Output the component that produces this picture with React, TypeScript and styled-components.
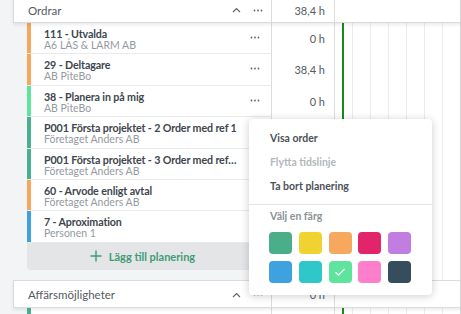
import styled, { createGlobalStyle } from 'styled-components';

const GlobalStyle = createGlobalStyle`
  html, body {
    margin: 0;
    padding: 0;
    background: #f3f4f6;
    font-family: "Lato", "Open Sans", sans-serif;
  }
`;

interface Row {
  title: string;
  sub: string;
  color: string;
  hours: string;
}

const rows: Row[] = [
  { title: '111 - Utvalda', sub: 'A6 LÅS & LARM AB', color: '#f6a75e', hours: '0 h' },
  { title: '29 - Deltagare', sub: 'AB PiteBo', color: '#f6a75e', hours: '38,4 h' },
  { title: '38 - Planera in på mig', sub: 'AB PiteBo', color: '#5ee49c', hours: '0 h' },
  { title: 'P001 Första projektet - 2 Order med ref 1', sub: 'Företaget Anders AB', color: '#48b08c', hours: '' },
  { title: 'P001 Första projektet - 3 Order med referens 2', sub: 'Företaget Anders AB', color: '#48b08c', hours: '' },
  { title: '60 - Arvode enligt avtal', sub: 'Företaget Anders AB', color: '#f6a75e', hours: '' },
  { title: '7 - Aproximation', sub: 'Personen 1', color: '#3fa1df', hours: '' },
];

const swatches = [
  '#4aae8b', '#f0d330', '#f6a95e', '#e2246a', '#c17ddf',
  '#3fa1df', '#2fc7c7', '#5ee49c', '#fd7fcb', '#354d5d',
];

const Page = styled.div`
  position: relative;
  width: 461px;
  height: 314px;
  overflow: hidden;
  background: #f3f4f6;
  display: flex;
  flex-direction: column;
`;

const Group = styled.div<{ $first?: boolean }>`
  display: flex;
  flex-direction: column;
  margin-top: ${p => (p.$first ? '-5px' : '0')};
`;

const Header = styled.div`
  display: flex;
  height: 26px;
  margin-left: 13px;
  background: #fff;
  border: 1px solid #d9dbde;
  border-right: none;
  box-shadow: 0 2px 3px rgba(0, 0, 0, 0.08);
  position: relative;
  z-index: 1;
`;

const HeaderLabel = styled.div`
  width: 258px;
  flex: none;
  display: flex;
  align-items: center;
  padding: 2px 0 0 14px;
  box-sizing: border-box;
  border-right: 1px solid #dcdcdc;
  font-size: 11.5px;
  color: #555b61;
`;

const HeaderTitle = styled.span`
  flex: 1;
`;

const IconSlot = styled.span<{ $w: number }>`
  width: ${p => p.$w}px;
  flex: none;
  display: flex;
  align-items: center;
  justify-content: center;
  color: #5c6369;
`;

const Hours = styled.div<{ $header?: boolean }>`
  width: 63px;
  flex: none;
  box-sizing: border-box;
  border-right: 1px solid #dcdcdc;
  background: #fff;
  display: flex;
  align-items: ${p => (p.$header ? 'center' : 'flex-start')};
  justify-content: flex-end;
  padding: ${p => (p.$header ? '2px 9px 0 0' : '9px 9px 0 0')};
  font-size: 11px;
  color: #555b61;
`;

const Timeline = styled.div<{ $grid?: boolean }>`
  width: 126px;
  flex: none;
  box-sizing: border-box;
  border-right: 1px solid #d4d4d4;
  background-color: #fff;
  background-image: ${p =>
    p.$grid
      ? `linear-gradient(to right, transparent 7px, #178a1e 7px, #178a1e 9px, transparent 9px),
         repeating-linear-gradient(to right, transparent 0, transparent 17px, #ececec 17px, #ececec 18px)`
      : 'none'};
`;

const BodyRow = styled.div<{ $h: number }>`
  display: flex;
  height: ${p => p.$h}px;
`;

const LabelCell = styled.div`
  margin-left: 27px;
  width: 245px;
  flex: none;
  display: flex;
  box-sizing: border-box;
  border-right: 1px solid #dcdcdc;
  border-bottom: 1px solid #e9eaeb;
  background: #fff;
`;

const ColorBar = styled.div<{ $color: string }>`
  width: 4px;
  flex: none;
  background: ${p => p.$color};
`;

const Texts = styled.div`
  flex: 1;
  min-width: 0;
  padding: 4px 0 0 13px;
  display: flex;
  flex-direction: column;
`;

const Title = styled.div`
  font-size: 10.7px;
  font-weight: 700;
  letter-spacing: -0.12px;
  color: #3d454d;
  white-space: nowrap;
  overflow: hidden;
  text-overflow: ellipsis;
  line-height: 13px;
`;

const Sub = styled.div`
  font-size: 10.5px;
  color: #959a9f;
  white-space: nowrap;
  line-height: 11px;
`;

const RowDots = styled.div`
  width: 28px;
  flex: none;
  display: flex;
  justify-content: center;
  padding: 13px 2px 0 0;
  color: #5c6369;
`;

const AddCell = styled.div`
  margin-left: 27px;
  width: 245px;
  flex: none;
  box-sizing: border-box;
  background: #e4e5e7;
  border-radius: 0 0 4px 4px;
  display: flex;
  align-items: center;
  justify-content: center;
  gap: 7px;
  color: #3f9c74;
  font-size: 11px;
  font-weight: 700;
  padding-right: 14px;
`;

const GapCell = styled.div`
  margin-left: 27px;
  width: 245px;
  flex: none;
`;

const Menu = styled.div`
  position: absolute;
  left: 249px;
  top: 119px;
  width: 183px;
  height: 176px;
  box-sizing: border-box;
  background: #fff;
  border-radius: 4px;
  box-shadow: 0 1px 8px rgba(0, 0, 0, 0.2);
  z-index: 5;
  display: flex;
  flex-direction: column;
  padding-top: 7px;
`;

const MenuItem = styled.div<{ $disabled?: boolean }>`
  height: 24px;
  display: flex;
  align-items: center;
  padding-left: 21px;
  font-size: 10.5px;
  font-weight: 700;
  color: ${p => (p.$disabled ? '#b4b7ba' : '#4a5157')};
`;

const Divider = styled.div`
  height: 1px;
  background: #e3e4e5;
  margin: 6px 0 0;
`;

const MenuLabel = styled.div`
  padding: 5px 0 0 21px;
  height: 18px;
  font-size: 10.5px;
  font-weight: 700;
  color: #8c9196;
`;

const SwatchGrid = styled.div`
  display: grid;
  grid-template-columns: repeat(5, 23px);
  gap: 7px 6.8px;
  padding: 4px 0 0 20px;
`;

const Swatch = styled.div<{ $color: string }>`
  width: 23px;
  height: 22px;
  border-radius: 4px;
  background: ${p => p.$color};
  display: flex;
  align-items: center;
  justify-content: center;
`;

const Dots = () => (
  <svg width="10" height="3" viewBox="0 0 10 3">
    <circle cx="1.5" cy="1.5" r="0.9" fill="currentColor" />
    <circle cx="5" cy="1.5" r="0.9" fill="currentColor" />
    <circle cx="8.5" cy="1.5" r="0.9" fill="currentColor" />
  </svg>
);

const Chevron = () => (
  <svg width="9" height="6" viewBox="0 0 9 6">
    <polyline points="1,5 4.5,1.5 8,5" fill="none" stroke="currentColor" strokeWidth="1.1" />
  </svg>
);

const GroupHeader = ({ title, hours }: { title: string; hours: string }) => (
  <Header>
    <HeaderLabel>
      <HeaderTitle>{title}</HeaderTitle>
      <IconSlot $w={16}>
        <Chevron />
      </IconSlot>
      <IconSlot $w={27}>
        <Dots />
      </IconSlot>
    </HeaderLabel>
    <Hours $header>{hours}</Hours>
    <Timeline />
  </Header>
);

export default function App() {
  return (
    <>
      <GlobalStyle />
      <Page>
        <Group $first>
          <GroupHeader title="Ordrar" hours="38,4 h" />
          {rows.map((r, i) => (
            <BodyRow key={i} $h={31.4}>
              <LabelCell>
                <ColorBar $color={r.color} />
                <Texts>
                  <Title>{r.title}</Title>
                  <Sub>{r.sub}</Sub>
                </Texts>
                <RowDots>
                  <Dots />
                </RowDots>
              </LabelCell>
              <Hours>{r.hours}</Hours>
              <Timeline $grid />
            </BodyRow>
          ))}
          <BodyRow $h={27}>
            <AddCell>
              <svg width="12" height="12" viewBox="0 0 12 12">
                <path d="M6 0.5v11M0.5 6h11" stroke="currentColor" strokeWidth="1.4" />
              </svg>
              Lägg till planering
            </AddCell>
            <Hours />
            <Timeline $grid />
          </BodyRow>
          <BodyRow $h={10}>
            <GapCell />
            <Hours />
            <Timeline $grid />
          </BodyRow>
        </Group>
        <Group>
          <GroupHeader title="Affärsmöjligheter" hours="0 h" />
          <BodyRow $h={31.4}>
            <LabelCell>
              <ColorBar $color="#48b08c" />
              <Texts />
            </LabelCell>
            <Hours />
            <Timeline $grid />
          </BodyRow>
        </Group>
        <Menu>
          <MenuItem>Visa order</MenuItem>
          <MenuItem $disabled>Flytta tidslinje</MenuItem>
          <MenuItem>Ta bort planering</MenuItem>
          <Divider />
          <MenuLabel>Välj en färg</MenuLabel>
          <SwatchGrid>
            {swatches.map((c, i) => (
              <Swatch key={i} $color={c}>
                {i === 7 && (
                  <svg width="12" height="10" viewBox="0 0 12 10">
                    <polyline points="1.5,5.2 4.5,8 10.5,2" fill="none" stroke="#fff" strokeWidth="1.3" />
                  </svg>
                )}
              </Swatch>
            ))}
          </SwatchGrid>
        </Menu>
      </Page>
    </>
  );
}
